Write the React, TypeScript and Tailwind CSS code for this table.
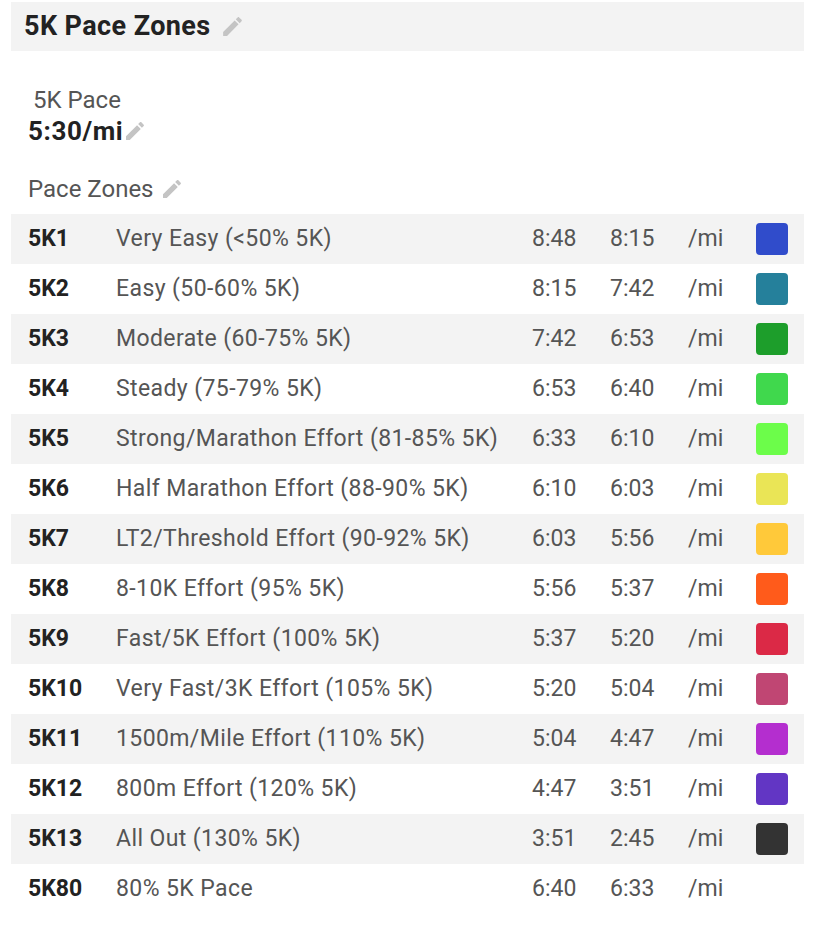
interface Zone {
  code: string;
  name: string;
  from: string;
  to: string;
  color?: string;
}

const zones: Zone[] = [
  { code: "5K1", name: "Very Easy (<50% 5K)", from: "8:48", to: "8:15", color: "bg-[#304ccb]" },
  { code: "5K2", name: "Easy (50-60% 5K)", from: "8:15", to: "7:42", color: "bg-[#25809b]" },
  { code: "5K3", name: "Moderate (60-75% 5K)", from: "7:42", to: "6:53", color: "bg-[#1d9e2b]" },
  { code: "5K4", name: "Steady (75-79% 5K)", from: "6:53", to: "6:40", color: "bg-[#40d84d]" },
  { code: "5K5", name: "Strong/Marathon Effort (81-85% 5K)", from: "6:33", to: "6:10", color: "bg-[#6cfd4a]" },
  { code: "5K6", name: "Half Marathon Effort (88-90% 5K)", from: "6:10", to: "6:03", color: "bg-[#eae556]" },
  { code: "5K7", name: "LT2/Threshold Effort (90-92% 5K)", from: "6:03", to: "5:56", color: "bg-[#ffc93a]" },
  { code: "5K8", name: "8-10K Effort (95% 5K)", from: "5:56", to: "5:37", color: "bg-[#ff5b1b]" },
  { code: "5K9", name: "Fast/5K Effort (100% 5K)", from: "5:37", to: "5:20", color: "bg-[#db2946]" },
  { code: "5K10", name: "Very Fast/3K Effort (105% 5K)", from: "5:20", to: "5:04", color: "bg-[#c04673]" },
  { code: "5K11", name: "1500m/Mile Effort (110% 5K)", from: "5:04", to: "4:47", color: "bg-[#b42ecf]" },
  { code: "5K12", name: "800m Effort (120% 5K)", from: "4:47", to: "3:51", color: "bg-[#6236c4]" },
  { code: "5K13", name: "All Out (130% 5K)", from: "3:51", to: "2:45", color: "bg-[#333333]" },
  { code: "5K80", name: "80% 5K Pace", from: "6:40", to: "6:33" },
];

function EditIcon({ className }: { className?: string }) {
  return (
    <svg viewBox="0 0 24 24" className={className} fill="currentColor">
      <path d="M3 17.25V21h3.75L17.81 9.94l-3.75-3.75L3 17.25zM20.71 7.04c.39-.39.39-1.02 0-1.41l-2.34-2.34c-.39-.39-1.02-.39-1.41 0l-1.83 1.83 3.75 3.75 1.83-1.83z" />
    </svg>
  );
}

export default function App() {
  return (
    <div className="min-h-[940px] bg-white pl-[11px] pt-[2px] font-['Roboto',sans-serif]">
      <div className="w-[793px]">
        <div className="flex h-[49px] items-center gap-[9px] bg-[#f3f3f3] pl-[13px]">
          <h1 className="text-[27px] font-bold tracking-[0.4px] text-[#222]">5K Pace Zones</h1>
          <EditIcon className="h-[25px] w-[25px] text-[#c4c4c4]" />
        </div>

        <div className="pl-[17px] pt-[35px]">
          <div className="pl-[5px] text-[24px] leading-[28px] text-[#555]">5K Pace</div>
          <div className="mt-[2px] flex items-center">
            <span className="text-[26px] font-bold leading-[30px] tracking-[0.6px] text-[#222]">5:30/mi</span>
            <EditIcon className="h-[24px] w-[24px] text-[#c4c4c4]" />
          </div>
          <div className="mt-[29px] flex items-center gap-[6px] text-[24px] leading-[28px] text-[#555]">
            <span>Pace Zones</span>
            <EditIcon className="h-[24px] w-[24px] text-[#c4c4c4]" />
          </div>
        </div>

        <div className="mt-[11px]">
          {zones.map((z, i) => (
            <div
              key={z.code}
              className={`flex h-[50px] items-center text-[23px] ${i % 2 === 0 ? "bg-[#f3f3f3]" : "bg-white"}`}
            >
              <div className="w-[105px] pl-[17px] font-bold text-[#222]">{z.code}</div>
              <div className="flex-1 tracking-[0.4px] text-[#555]">{z.name}</div>
              <div className="w-[78px] text-[#555]">{z.from}</div>
              <div className="w-[78px] text-[#555]">{z.to}</div>
              <div className="w-[68px] text-[#555]">/mi</div>
              <div className="w-[48px]">
                {z.color && <div className={`h-[32px] w-[32px] rounded-[4px] ${z.color}`} />}
              </div>
            </div>
          ))}
        </div>
      </div>
    </div>
  );
}
